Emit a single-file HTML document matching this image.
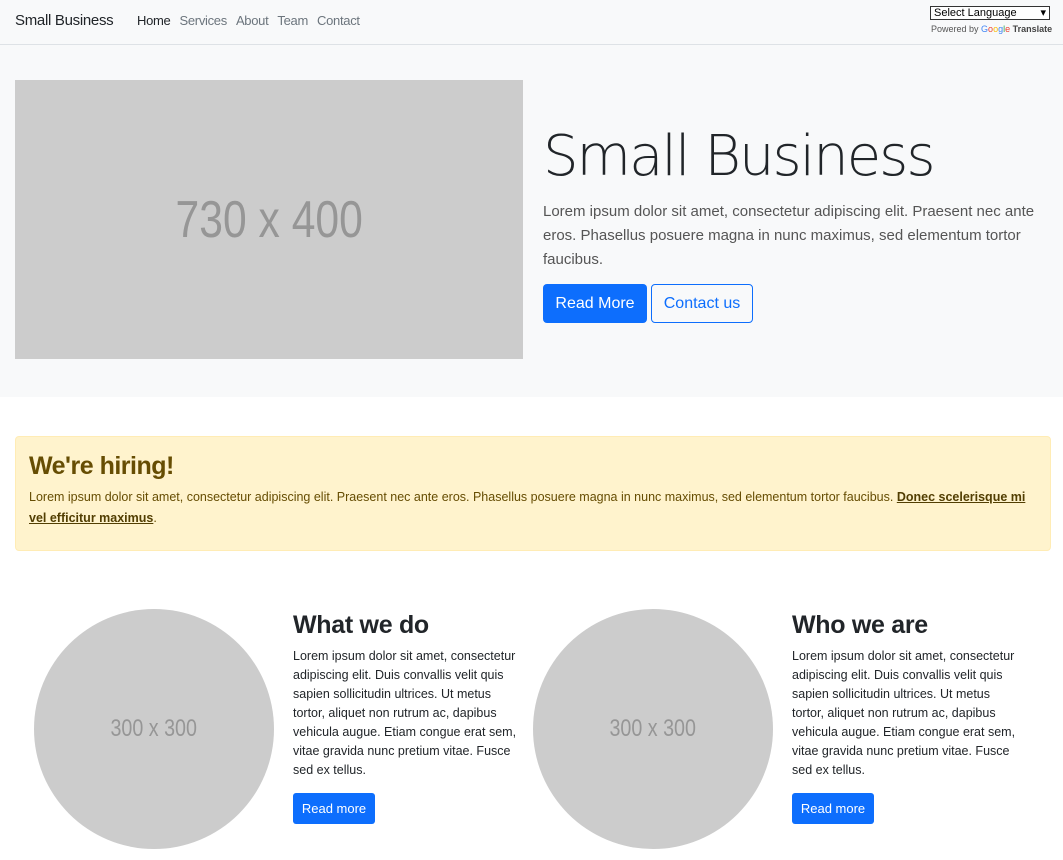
<!DOCTYPE html>
<html><head><meta charset="utf-8"><style>
*{box-sizing:border-box;margin:0;padding:0}
body{width:1063px;height:860px;overflow:hidden;background:#fff;font-family:"Liberation Sans Narrow","Liberation Sans",sans-serif;color:#212529}
.nav{height:45px;background:#f8f9fa;border-bottom:1px solid #dee2e6;position:relative}
.brand{position:absolute;left:15px;top:12px;font-size:15px;color:#212529;letter-spacing:-0.3px}
.links{position:absolute;left:137px;top:13px;font-size:13px;color:#6c757d;letter-spacing:-0.3px}
.links span{margin-right:9px}
.sel{position:absolute;left:930px;top:6px;width:120px;height:14px;border:1px solid #333;background:#fff;font-size:11px;line-height:12px;padding-left:3px;font-family:"Liberation Sans",sans-serif;color:#000}
.sel:after{content:"▾";position:absolute;right:3px;top:0;font-size:11px}
.pw{position:absolute;left:931px;top:24px;font-size:9px;color:#555;font-family:"Liberation Sans",sans-serif;white-space:nowrap}
.hero{position:absolute;top:45px;left:0;width:1063px;height:352px;background:#f8f9fa}
.img1{position:absolute;left:15px;top:80px;width:508px;height:279px;background:#ccc;color:#969696;font-size:52px;font-family:"Liberation Sans",sans-serif;display:flex;align-items:center;justify-content:center}
.img1 span,.circ span{display:inline-block;transform:scaleX(0.82)}
h1{position:absolute;left:543px;top:124px;font-size:56px;font-family:"DejaVu Sans","Liberation Sans",sans-serif;font-weight:200;letter-spacing:-2px;color:#212529;white-space:nowrap}
.hp{position:absolute;left:543px;top:200px;font-size:15px;line-height:24px;color:#555;white-space:nowrap}
.btn{position:absolute;border-radius:4px;font-size:16px;display:flex;align-items:center;justify-content:center}
.alert{position:absolute;left:15px;top:436px;width:1036px;height:115px;background:#fff3cd;border:1px solid #ffecb5;border-radius:4px;color:#664d03}
.alert h4{position:absolute;left:13px;top:15px;font-size:25px;font-weight:600;letter-spacing:-0.5px}
.alert p{position:absolute;left:13px;top:50px;font-size:12.5px;line-height:21px;white-space:nowrap}
.alert b{text-decoration:underline;color:#523e02}
.circ{position:absolute;top:609px;width:240px;height:240px;border-radius:50%;background:#ccc;color:#969696;font-size:24px;font-family:"Liberation Sans",sans-serif;display:flex;align-items:center;justify-content:center}
h2{position:absolute;top:611px;font-size:25px;font-weight:600;white-space:nowrap;letter-spacing:-0.3px}
.cp{position:absolute;top:647px;font-size:12.5px;line-height:19px;white-space:nowrap}
.sb{position:absolute;top:793px;width:82px;height:31px;background:#0d6efd;color:#fff;border-radius:3px;font-size:13px;display:flex;align-items:center;justify-content:center}
</style></head><body>
<div class="nav">
<div class="brand">Small Business</div>
<div class="links"><span style="color:#212529">Home</span><span>Services</span><span>About</span><span>Team</span><span>Contact</span></div>
<div class="sel">Select Language</div>
<div class="pw">Powered by <span style="color:#4285f4">G</span><span style="color:#ea4335">o</span><span style="color:#fbbc05">o</span><span style="color:#4285f4">g</span><span style="color:#34a853">l</span><span style="color:#ea4335">e</span> <b style="color:#444">Translate</b></div>
</div>
<div class="hero"></div>
<div class="img1"><span>730 x 400</span></div>
<h1>Small Business</h1>
<div class="hp">Lorem ipsum dolor sit amet, consectetur adipiscing elit. Praesent nec ante<br>eros. Phasellus posuere magna in nunc maximus, sed elementum tortor<br>faucibus.</div>
<div class="btn" style="left:543px;top:284px;width:104px;height:39px;background:#0d6efd;color:#fff">Read More</div>
<div class="btn" style="left:651px;top:284px;width:102px;height:39px;border:1px solid #0d6efd;color:#0d6efd">Contact us</div>
<div class="alert"><h4>We're hiring!</h4><p>Lorem ipsum dolor sit amet, consectetur adipiscing elit. Praesent nec ante eros. Phasellus posuere magna in nunc maximus, sed elementum tortor faucibus. <b>Donec scelerisque mi</b><br><b>vel efficitur maximus</b>.</p></div>
<div class="circ" style="left:34px"><span>300 x 300</span></div>
<h2 style="left:293px">What we do</h2>
<div class="cp" style="left:293px">Lorem ipsum dolor sit amet, consectetur<br>adipiscing elit. Duis convallis velit quis<br>sapien sollicitudin ultrices. Ut metus<br>tortor, aliquet non rutrum ac, dapibus<br>vehicula augue. Etiam congue erat sem,<br>vitae gravida nunc pretium vitae. Fusce<br>sed ex tellus.</div>
<div class="sb" style="left:293px">Read more</div>
<div class="circ" style="left:533px"><span>300 x 300</span></div>
<h2 style="left:792px">Who we are</h2>
<div class="cp" style="left:792px">Lorem ipsum dolor sit amet, consectetur<br>adipiscing elit. Duis convallis velit quis<br>sapien sollicitudin ultrices. Ut metus<br>tortor, aliquet non rutrum ac, dapibus<br>vehicula augue. Etiam congue erat sem,<br>vitae gravida nunc pretium vitae. Fusce<br>sed ex tellus.</div>
<div class="sb" style="left:792px">Read more</div>
</body></html>
